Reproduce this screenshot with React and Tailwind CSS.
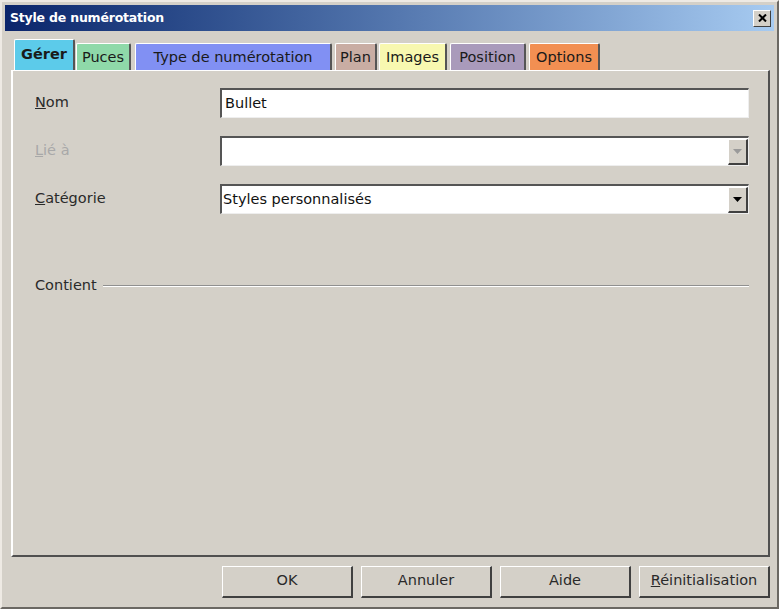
import React from "react";

const tabs = [
  { label: "Gérer", bg: "bg-[#5ccbea]", active: true, cls: "w-[61px] ml-0" },
  { label: "Puces", bg: "bg-[#8fd9a9]", cls: "w-[55px] ml-[1px]" },
  { label: "Type de numérotation", bg: "bg-[#8190f3]", cls: "w-[197px] ml-[4px]" },
  { label: "Plan", bg: "bg-[#c9ada3]", cls: "w-[42px] ml-[3px]" },
  { label: "Images", bg: "bg-[#f8f8b0]", cls: "w-[68px] ml-[2px]" },
  { label: "Position", bg: "bg-[#a99abb]", cls: "w-[76px] ml-[3px]" },
  { label: "Options", bg: "bg-[#f28f52]", cls: "w-[71px] ml-[3px]" },
];

function Field({ children }) {
  return (
    <div className="h-[30px] flex-1 bg-white border-t-2 border-l-2 border-t-[#555] border-l-[#555] border-b border-r border-b-[#eee] border-r-[#eee] flex items-center px-[3px] text-[14.5px] text-[#111]">
      {children}
    </div>
  );
}

function Combo({ children, disabled }) {
  return (
    <div className="h-[30px] flex-1 bg-white border-t-2 border-l-2 border-t-[#555] border-l-[#555] border-b border-r border-b-[#eee] border-r-[#eee] flex items-center text-[14.5px] text-[#111]">
      <span className="flex-1 pl-[1px]">{children}</span>
      <div className="w-[20px] h-[26px] bg-[#d4d0c8] border-t border-l border-t-white border-l-white border-b-2 border-r-2 border-b-[#404040] border-r-[#404040] flex items-center justify-center">
        <svg width="9" height="5" viewBox="0 0 9 5">
          <path d="M0 0h9L4.5 5z" fill={disabled ? "#9a9a9a" : "#000"} />
        </svg>
      </div>
    </div>
  );
}

function Button({ children }) {
  return (
    <div className="w-[131px] h-[32px] bg-[#d4d0c8] border-t border-l border-t-white border-l-white border-b-2 border-r-2 border-b-[#404040] border-r-[#404040] flex items-center justify-center text-[14.5px] text-[#2a2a2a]">
      {children}
    </div>
  );
}

export default function App() {
  return (
    <div className="w-[779px] h-[609px] bg-[#d4d0c8] font-['DejaVu_Sans',sans-serif] border-t-2 border-l-2 border-t-[#eeeae4] border-l-[#eeeae4] border-b-2 border-r-2 border-b-[#6b6863] border-r-[#6b6863] p-[3px] flex flex-col">
      {/* title bar */}
      <div className="h-[26px] bg-gradient-to-r from-[#0b256b] to-[#a7cbf1] flex items-center justify-between pl-[5px] pr-[3px]">
        <span className="text-white font-bold text-[12.5px] tracking-[-0.2px]">Style de numérotation</span>
        <div className="w-[18px] h-[17px] bg-[#d4d0c8] border-t border-l border-t-white border-l-white border-b border-r border-b-[#404040] border-r-[#404040] flex items-center justify-center">
          <svg width="9" height="8" viewBox="0 0 9 8">
            <path d="M1 0.5L8 7.5M8 0.5L1 7.5" stroke="#000" strokeWidth="2" />
          </svg>
        </div>
      </div>

      {/* tab strip */}
      <div className="flex items-end mt-[8px] ml-[9px] h-[31px]">
        {tabs.map((t) => (
          <div
            key={t.label}
            className={`${t.bg} ${t.cls} flex items-center justify-center text-[14.5px] text-[#1a1a1a] border-t border-l border-t-white border-l-white border-r-2 border-r-[#555] rounded-t-[2px] ${
              t.active ? "h-[31px] font-bold" : "h-[27px] pt-[1px]"
            }`}
          >
            {t.label}
          </div>
        ))}
      </div>

      {/* tab panel */}
      <div className="flex-1 border-l-2 border-t border-l-white border-t-white border-r-2 border-b-2 border-r-[#505050] border-b-[#505050] ml-[6px] mr-[4px] flex flex-col pl-[22px] pr-[19px] pt-[17px]">
        <div className="flex items-center">
          <span className="w-[185px] text-[14.5px] text-[#2a2a2a]"><u>N</u>om</span>
          <Field>Bullet</Field>
        </div>
        <div className="flex items-center mt-[18px]">
          <span className="w-[185px] text-[14.5px] text-[#a8a8a8]"><u>L</u>ié à</span>
          <Combo disabled />
        </div>
        <div className="flex items-center mt-[18px]">
          <span className="w-[185px] text-[14.5px] text-[#2a2a2a]"><u>C</u>atégorie</span>
          <Combo>Styles personnalisés</Combo>
        </div>
        <div className="flex items-center mt-[61px]">
          <span className="text-[14.5px] text-[#2a2a2a] pr-[6px]">Contient</span>
          <div className="flex-1 border-t border-b border-t-[#909090] border-b-white" />
        </div>
      </div>

      {/* buttons */}
      <div className="h-[47px] flex items-center justify-end gap-[8px] pr-[4px] pt-[2px]">
        <Button>OK</Button>
        <Button>Annuler</Button>
        <Button>Aide</Button>
        <Button><span><u>R</u>éinitialisation</span></Button>
      </div>
    </div>
  );
}
